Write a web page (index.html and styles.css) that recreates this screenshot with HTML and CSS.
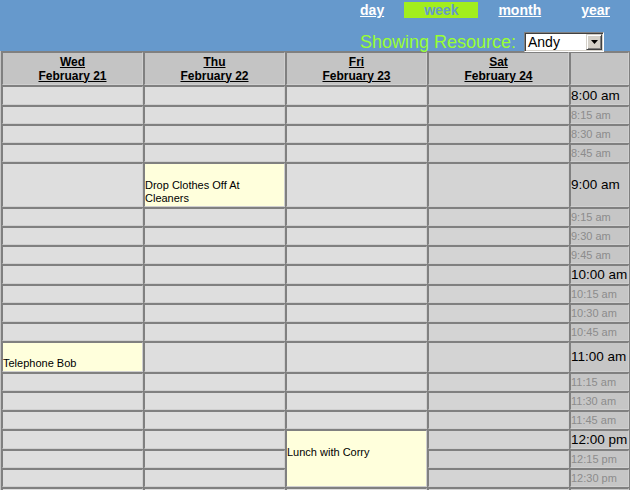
FILE: index.html
```html
<!DOCTYPE html>
<html>
<head>
<meta charset="utf-8">
<title>Week view</title>
<link rel="stylesheet" href="styles.css">
</head>
<body>
<div class="topbar">
  <nav class="views">
    <a class="view" href="#">day</a>
    <a class="view current" href="#">week</a>
    <a class="view" href="#">month</a>
    <a class="view" href="#">year</a>
  </nav>
  <div class="resource">
    <span class="resource-label">Showing Resource:</span>
    <div class="select">
      <span class="select-value">Andy</span>
      <span class="select-btn"><svg width="7" height="4" viewBox="0 0 7 4"><path d="M0 0H7L3.5 4Z" fill="#000"/></svg></span>
    </div>
  </div>
</div>
<table class="week">
  <colgroup>
    <col class="c-day"><col class="c-day"><col class="c-day"><col class="c-day"><col class="c-time">
  </colgroup>
  <tr class="r-head">
    <th class="head"><a href="#">Wed</a><br><a href="#">February 21</a></th>
    <th class="head"><a href="#">Thu</a><br><a href="#">February 22</a></th>
    <th class="head"><a href="#">Fri</a><br><a href="#">February 23</a></th>
    <th class="head"><a href="#">Sat</a><br><a href="#">February 24</a></th>
    <th class="head"></th>
  </tr>
  <tr class="r-hour">
    <td class="day"></td><td class="day"></td><td class="day"></td><td class="day wkend"></td><td class="time hour">8:00 am</td>
  </tr>
  <tr class="r-q">
    <td class="day"></td><td class="day"></td><td class="day"></td><td class="day wkend"></td><td class="time">8:15 am</td>
  </tr>
  <tr class="r-q">
    <td class="day"></td><td class="day"></td><td class="day"></td><td class="day wkend"></td><td class="time">8:30 am</td>
  </tr>
  <tr class="r-q">
    <td class="day"></td><td class="day"></td><td class="day"></td><td class="day wkend"></td><td class="time">8:45 am</td>
  </tr>
  <tr class="r-9">
    <td class="day"></td><td class="event mid"><div class="ev-text">Drop Clothes Off At Cleaners</div></td><td class="day"></td><td class="day wkend"></td><td class="time hour">9:00 am</td>
  </tr>
  <tr class="r-q">
    <td class="day"></td><td class="day"></td><td class="day"></td><td class="day wkend"></td><td class="time">9:15 am</td>
  </tr>
  <tr class="r-q">
    <td class="day"></td><td class="day"></td><td class="day"></td><td class="day wkend"></td><td class="time">9:30 am</td>
  </tr>
  <tr class="r-q">
    <td class="day"></td><td class="day"></td><td class="day"></td><td class="day wkend"></td><td class="time">9:45 am</td>
  </tr>
  <tr class="r-hour">
    <td class="day"></td><td class="day"></td><td class="day"></td><td class="day wkend"></td><td class="time hour">10:00 am</td>
  </tr>
  <tr class="r-q">
    <td class="day"></td><td class="day"></td><td class="day"></td><td class="day wkend"></td><td class="time">10:15 am</td>
  </tr>
  <tr class="r-q">
    <td class="day"></td><td class="day"></td><td class="day"></td><td class="day wkend"></td><td class="time">10:30 am</td>
  </tr>
  <tr class="r-q">
    <td class="day"></td><td class="day"></td><td class="day"></td><td class="day wkend"></td><td class="time">10:45 am</td>
  </tr>
  <tr class="r-11">
    <td class="event mid"><div class="ev-text">Telephone Bob</div></td><td class="day"></td><td class="day"></td><td class="day wkend"></td><td class="time hour">11:00 am</td>
  </tr>
  <tr class="r-q">
    <td class="day"></td><td class="day"></td><td class="day"></td><td class="day wkend"></td><td class="time">11:15 am</td>
  </tr>
  <tr class="r-q">
    <td class="day"></td><td class="day"></td><td class="day"></td><td class="day wkend"></td><td class="time">11:30 am</td>
  </tr>
  <tr class="r-q">
    <td class="day"></td><td class="day"></td><td class="day"></td><td class="day wkend"></td><td class="time">11:45 am</td>
  </tr>
  <tr class="r-hour">
    <td class="day"></td><td class="day"></td><td class="event top" rowspan="3"><div class="ev-text">Lunch with Corry</div></td><td class="day wkend"></td><td class="time hour">12:00 pm</td>
  </tr>
  <tr class="r-q">
    <td class="day"></td><td class="day"></td><td class="day wkend"></td><td class="time">12:15 pm</td>
  </tr>
  <tr class="r-q">
    <td class="day"></td><td class="day"></td><td class="day wkend"></td><td class="time">12:30 pm</td>
  </tr>
  <tr class="r-q">
    <td class="day"></td><td class="day"></td><td class="day"></td><td class="day wkend"></td><td class="time"></td>
  </tr>
</table>
</body>
</html>
```
FILE: styles.css
```css
html, body {
  margin: 0;
  padding: 0;
  height: 490px;
  overflow: hidden;
}
body {
  background: #c4c4c4;
  font-family: "Liberation Sans", Arial, sans-serif;
}
.topbar {
  background: #6699cc;
  height: 51px;
  box-sizing: border-box;
  padding-top: 2px;
}
.views {
  display: flex;
  justify-content: flex-end;
  height: 16px;
}
.view {
  display: block;
  padding: 0 20px;
  height: 16px;
  line-height: 16px;
  font-size: 14px;
  font-weight: bold;
  color: #ffffff;
  text-decoration: underline;
}
.view.current {
  background: #a2ee1e;
  color: #6699cc;
  text-decoration: none;
}
.resource {
  display: flex;
  justify-content: flex-end;
  align-items: center;
  margin-top: 14px;
  padding-right: 26px;
  gap: 8px;
  height: 20px;
}
.resource-label {
  font-size: 18px;
  line-height: 20px;
  color: #99ff33;
}
.select {
  width: 80px;
  height: 20px;
  box-sizing: border-box;
  background: #ffffff;
  border: 1px solid;
  border-color: #808080 #ffffff #ffffff #808080;
  box-shadow: inset 1px 1px 0 #404040, inset -1px -1px 0 #d4d0c8;
  display: flex;
  align-items: center;
  justify-content: space-between;
  padding: 1px;
}
.select-value {
  font-size: 14px;
  color: #000;
  padding-left: 2px;
  line-height: 16px;
}
.select-btn {
  width: 16px;
  height: 16px;
  box-sizing: border-box;
  background: #d4d0c8;
  border: 1px solid;
  border-color: #d4d0c8 #404040 #404040 #d4d0c8;
  box-shadow: inset 1px 1px 0 #ffffff, inset -1px -1px 0 #808080;
  display: flex;
  align-items: center;
  justify-content: center;
}
.week {
  table-layout: fixed;
  width: 629px;
  margin-left: 1px;
  border-collapse: separate;
  border-spacing: 1px;
  background: #808080;
}
.c-day { width: 141px; }
.c-time { width: 59px; }
.week td, .week th {
  box-sizing: border-box;
  border: 1px solid;
  border-color: #808080 #cfcfcf #cfcfcf #808080;
  padding: 0;
}
.r-head { height: 33px; }
.r-hour { height: 19px; }
.r-q { height: 18px; }
.r-9 { height: 44px; }
.r-11 { height: 30px; }
.head {
  background: #c4c4c4;
  font-size: 12px;
  line-height: 14px;
  font-weight: bold;
  text-align: center;
  vertical-align: middle;
}
.head a {
  color: #000;
  text-decoration: underline;
}
.day {
  background: #dedede;
}
.day.wkend {
  background: #d4d4d4;
}
.time {
  background: #c6c6c6;
  color: #8c8c8c;
  font-size: 11px;
  line-height: 14px;
  white-space: nowrap;
  vertical-align: middle;
  text-align: left;
}
.time.hour {
  color: #000;
  font-size: 13.5px;
  line-height: 16px;
}
.event {
  background: #ffffdc;
  font-size: 11px;
  line-height: 13px;
  color: #000;
  padding: 0 1px;
}
.event.mid { vertical-align: middle; }
.event.top { vertical-align: top; padding-top: 2px; }
.ev-text {
  padding-top: 13px;
}
```
